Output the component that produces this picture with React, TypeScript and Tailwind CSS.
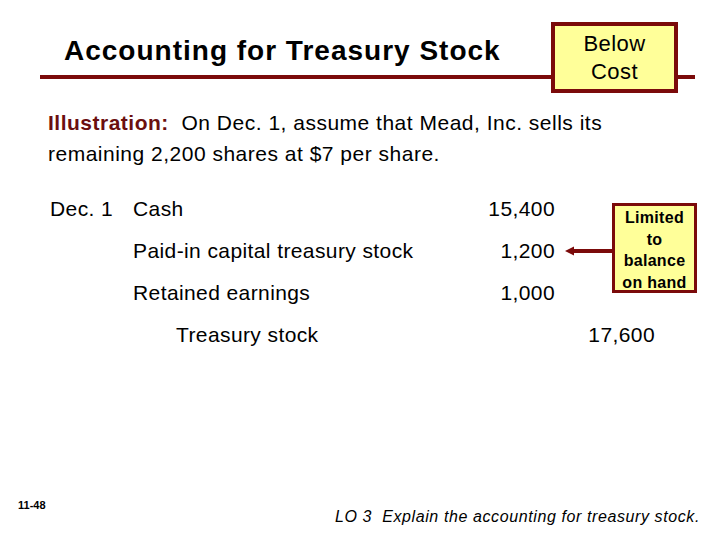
const entries = [
  { date: "Dec. 1", account: "Cash", debit: "15,400", credit: "", indent: false },
  { date: "", account: "Paid-in capital treasury stock", debit: "1,200", credit: "", indent: false },
  { date: "", account: "Retained earnings", debit: "1,000", credit: "", indent: false },
  { date: "", account: "Treasury stock", debit: "", credit: "17,600", indent: true },
];

const App = () => {
  return (
    <div className="relative flex h-[540px] w-[720px] flex-col overflow-hidden bg-white font-['Liberation_Sans',Arial,sans-serif] text-black">
      <header className="relative h-[100px] shrink-0">
        <h1 className="pl-[64px] pt-[37px] text-[28px] font-bold leading-[28px] tracking-[1px]">
          Accounting for Treasury Stock
        </h1>
        <div className="ml-[40px] mt-[10px] h-[4px] w-[655px] bg-[#7b0a0a]" />
        <div className="absolute left-[551px] top-[22px] flex h-[71px] w-[127px] flex-col items-center justify-center border-4 border-[#7b0a0a] bg-[#ffff99] text-[22px] leading-[28px] tracking-[0.4px]">
          <span>Below</span>
          <span>Cost</span>
        </div>
      </header>

      <p className="mt-[7px] pl-[48px] text-[21px] leading-[31px] tracking-[0.5px]">
        <span className="font-bold text-[#6b0f0f]">Illustration:</span>
        {"\u00a0 "}On Dec. 1, assume that Mead, Inc. sells its
        <br />
        remaining 2,200 shares at $7 per share.
      </p>

      <section className="relative mt-[19px] pl-[50px]">
        <div className="grid grid-cols-[83px_290px_132px_100px] text-[21px] tracking-[0.4px]">
          {entries.map((row) => (
            <div key={row.account} className="contents">
              <div className="flex h-[42px] items-center">{row.date}</div>
              <div className={`flex h-[42px] items-center ${row.indent ? "pl-[43px]" : ""}`}>
                {row.account}
              </div>
              <div className="flex h-[42px] items-center justify-end">{row.debit}</div>
              <div className="flex h-[42px] items-center justify-end">{row.credit}</div>
            </div>
          ))}
        </div>

        <svg className="absolute left-[564px] top-[57px]" width="50" height="12" viewBox="0 0 50 12">
          <line x1="8" y1="6" x2="50" y2="6" stroke="#7b0a0a" strokeWidth="4" />
          <polygon points="1,6 10,1.5 10,10.5" fill="#7b0a0a" />
        </svg>
        <div className="absolute left-[612px] top-[15px] flex h-[90px] w-[85px] flex-col items-center border-[3px] border-[#7b0a0a] bg-[#ffff99] pt-[1px] text-[16px] font-bold leading-[21.5px] tracking-[0.3px]">
          <span>Limited</span>
          <span>to</span>
          <span>balance</span>
          <span>on hand</span>
        </div>
      </section>

      <footer className="mt-auto flex h-[46px] items-start justify-between pl-[18px] pr-[20px]">
        <span className="mt-[3px] text-[11px] font-bold">11-48</span>
        <span className="mt-[11px] text-[16px] italic tracking-[0.6px]">
          LO 3&nbsp; Explain the accounting for treasury stock.
        </span>
      </footer>
    </div>
  );
};

export default App;
